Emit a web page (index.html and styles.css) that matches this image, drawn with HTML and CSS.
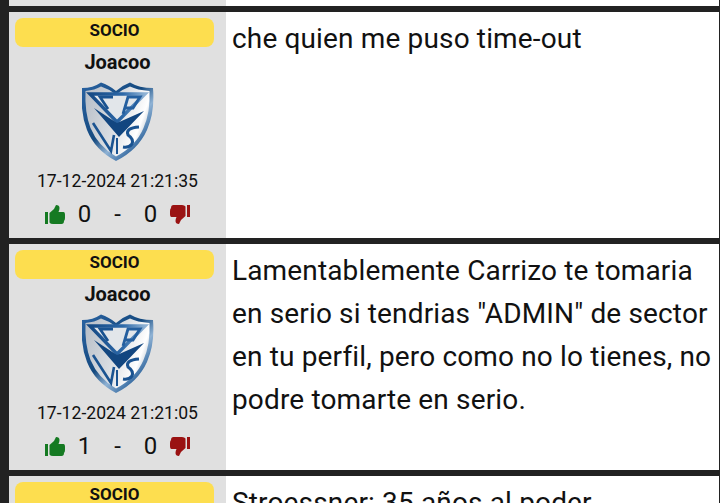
FILE: index.html
```html
<!DOCTYPE html>
<html lang="en">
<head>
    <meta charset="UTF-8">
    <meta name="viewport" content="width=device-width, initial-scale=1.0">
    <title>Comentarios</title>
    <link rel="stylesheet" href="styles.css">
</head>
<body>
    <svg class="defs" width="0" height="0">
        <defs>
            <linearGradient id="rim" x1="0" y1="0" x2="1" y2="1">
                <stop offset="0" stop-color="#2b64a3"/>
                <stop offset="0.45" stop-color="#14497f"/>
                <stop offset="0.62" stop-color="#8fb2d4"/>
                <stop offset="0.85" stop-color="#1b5592"/>
                <stop offset="1" stop-color="#174c85"/>
            </linearGradient>
            <linearGradient id="gloss" x1="0" y1="0.2" x2="1" y2="0.6">
                <stop offset="0" stop-color="#b9c0c9"/>
                <stop offset="0.5" stop-color="#d9dde2"/>
                <stop offset="0.85" stop-color="#ffffff"/>
                <stop offset="1" stop-color="#b9c4d0"/>
            </linearGradient>
            <linearGradient id="band" x1="0" y1="0" x2="1" y2="0">
                <stop offset="0" stop-color="#164a85"/>
                <stop offset="0.6" stop-color="#2c68a8"/>
                <stop offset="1" stop-color="#8fb2d4"/>
            </linearGradient>
            <symbol id="shield" viewBox="0 0 72 80">
                <path d="M0 6 Q11 6 19 0.5 Q27 3 34 9 Q41 3 48 0.5 Q57 6 71 6 Q73 30 65 48 Q56 68 34 79 Q13 68 5 48 Q-2 30 0 6Z" fill="url(#rim)"/>
                <path d="M3.500 9 Q13 8 19 4.500 Q27 7 34 12.500 Q41 7 48 4.500 Q55 8 67.500 9 Q68.500 30 61.500 46 Q54 64 34 74.500 Q16 64 8.500 46 Q2.500 30 3.500 9Z" fill="url(#gloss)"/>
                <path d="M8 12 H63 L35 40Z" fill="#e2e6ea" stroke="url(#band)" stroke-width="3.400"/>
                <path d="M31 15 H18 L26 27" fill="none" stroke="#1a5391" stroke-width="2.800"/>
                <path d="M41 32 L46 15 H58 L51 26 H43" fill="none" stroke="#245f9f" stroke-width="2.800"/>
                <path d="M12 26 L35 41 L62 29 L37 55Z" fill="#124680"/>
                <path d="M11 41 L29 69 L32 53" fill="none" stroke="#1a5391" stroke-width="2.600"/>
                <path d="M35 56 V72" stroke="#1a5391" stroke-width="2"/>
                <path d="M57 45 Q43 46 46 53 Q52 57 50 62 Q47 66 41 65" fill="none" stroke="#1a5391" stroke-width="3"/>
            </symbol>
            <symbol id="thumb" viewBox="0 0 20 19">
                <rect x="0" y="7" width="3" height="12"/>
                <path d="M4.500 8 L9 4 L11 0 Q14.500 0 14.500 3 Q14.500 5 13.500 7 H18.500 Q20 7 20 10 Q20 12 20 13 Q20 15 19 16 Q19 19 16.500 19 H8 Q5.500 19 4.500 17.500Z"/>
            </symbol>
        </defs>
    </svg>

    <div class="thread">
        <div class="post post-stub">
            <div class="side"></div>
            <div class="body"></div>
        </div>

        <div class="post">
            <div class="side">
                <div class="rank">SOCIO</div>
                <div class="user">Joacoo</div>
                <svg class="shield"><use href="#shield"/></svg>
                <div class="date">17-12-2024 21:21:35</div>
                <div class="votes">
                    <svg class="thumb up"><use href="#thumb"/></svg>
                    <span>0</span>
                    <span>-</span>
                    <span>0</span>
                    <svg class="thumb down"><use href="#thumb"/></svg>
                </div>
            </div>
            <div class="body">che quien me puso time-out</div>
        </div>

        <div class="post">
            <div class="side">
                <div class="rank">SOCIO</div>
                <div class="user">Joacoo</div>
                <svg class="shield"><use href="#shield"/></svg>
                <div class="date">17-12-2024 21:21:05</div>
                <div class="votes">
                    <svg class="thumb up"><use href="#thumb"/></svg>
                    <span>1</span>
                    <span>-</span>
                    <span>0</span>
                    <svg class="thumb down"><use href="#thumb"/></svg>
                </div>
            </div>
            <div class="body">Lamentablemente Carrizo te tomaria en serio si tendrias "ADMIN" de sector en tu perfil, pero como no lo tienes, no podre tomarte en serio.</div>
        </div>

        <div class="post">
            <div class="side">
                <div class="rank">SOCIO</div>
            </div>
            <div class="body">Stroessner: 35 años al poder</div>
        </div>
    </div>
</body>
</html>
```

FILE: styles.css
```css
* {
    margin: 0;
    padding: 0;
    box-sizing: border-box;
}

html, body {
    height: 503px;
    overflow: hidden;
}

body {
    background-color: #222;
    font-family: Roboto, "Liberation Sans", sans-serif;
    color: #111;
}

.defs {
    display: block;
}

.thread {
    display: flex;
    flex-direction: column;
    gap: 6px;
    padding: 0 1px 0 9px;
}

.post {
    display: flex;
    flex-shrink: 0;
    min-height: 226px;
}

.post-stub {
    min-height: 6px;
    height: 6px;
}

.side {
    width: 217px;
    flex-shrink: 0;
    padding-top: 6px;
    background-color: #e0e0e0;
    display: flex;
    flex-direction: column;
    align-items: center;
}

.body {
    flex: 1;
    padding: 5px 6px 0 6px;
    background-color: white;
    font-size: 28px;
    letter-spacing: 0.15px;
    line-height: 43px;
}

.rank {
    width: 199px;
    height: 29px;
    flex-shrink: 0;
    align-self: flex-start;
    margin-left: 6px;
    border-radius: 8px;
    background-color: #fdde4f;
    font-size: 17px;
    font-weight: bold;
    line-height: 25px;
    text-align: center;
}

.user {
    margin-top: 3px;
    font-size: 20px;
    font-weight: bold;
    line-height: 24px;
}

.shield {
    width: 72px;
    height: 80px;
    margin-top: 8px;
}

.date {
    margin-top: 8px;
    font-size: 17.6px;
    line-height: 22px;
}

.votes {
    margin-top: 8px;
    display: flex;
    align-items: center;
    justify-content: center;
    font-size: 24px;
    line-height: 28px;
}

.votes span {
    width: 33px;
    text-align: center;
}

.thumb {
    width: 20px;
    height: 19px;
    margin: 0 3px;
}

.up {
    fill: #157a22;
}

.down {
    fill: #9a1212;
    transform: rotate(180deg);
}
```
